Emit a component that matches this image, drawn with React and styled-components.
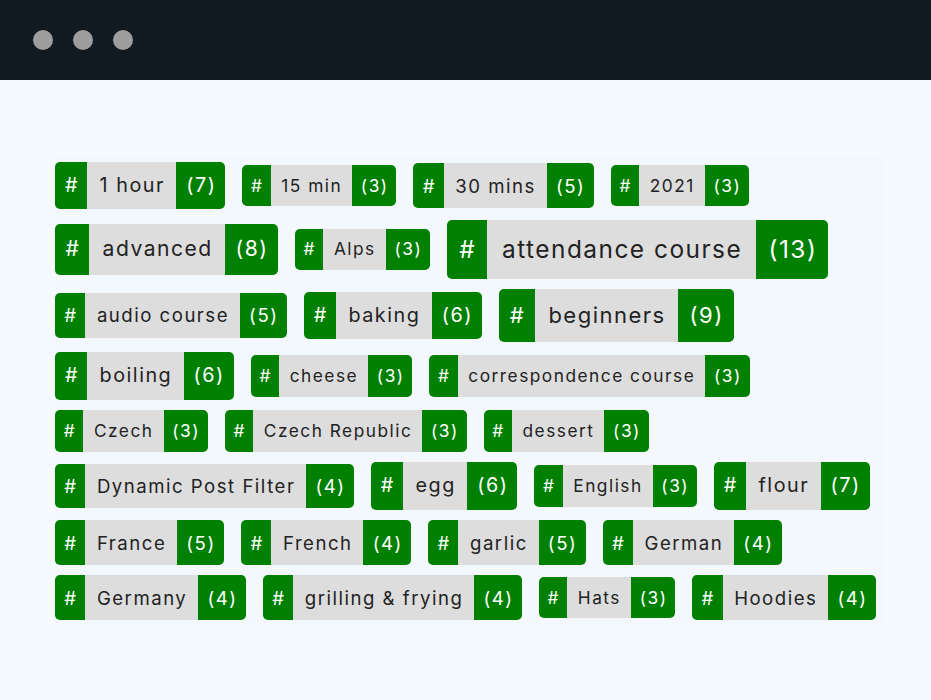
import React from 'react';
import styled,{ createGlobalStyle } from "styled-components"

const GlobalStyle = createGlobalStyle`
body {
    margin: 0;
    background: #f5faff;
    font-family: Inter, "Liberation Sans", sans-serif;
}
`

const TopBar = styled.div`
height: 80px;
background: #111a20;
display: flex;
align-items: center;
gap: 20px;
padding-left: 33px;
`

const Dot = styled.span`
width: 20px;
height: 20px;
border-radius: 50%;
background: #9e9e9e;
`

const Cloud = styled.div`
margin: 77px 48px 0 55px;
padding: 5px 0;
background: #f3f8fc;
display: flex;
flex-wrap: wrap;
align-items: center;
column-gap: 17px;
row-gap: 10.5px;
`

const Tag = styled.a`
display: flex;
border-radius: 5px;
overflow: hidden;
line-height: 1.4;
text-decoration: none;
font-size: ${p => p.$size}px;
`

const Hash = styled.span`
background: #008000;
color: #fff;
padding: 0.5em 0.5em;
`

const Name = styled.span`
background: #dddddd;
color: #222;
letter-spacing: 1.5px;
padding: 0.5em 0.58em 0.5em 0.62em;
`

const Count = styled.span`
background: #008000;
color: #fff;
letter-spacing: 1.5px;
padding: 0.5em 0.45em 0.5em 0.5em;
`

const TAGS = [
    ["1 hour",7],["15 min",3],["30 mins",5],["2021",3],
    ["advanced",8],["Alps",3],["attendance course",13],
    ["audio course",5],["baking",6],["beginners",9],
    ["boiling",6],["cheese",3],["correspondence course",3],
    ["Czech",3],["Czech Republic",3],["dessert",3],
    ["Dynamic Post Filter",4],["egg",6],["English",3],["flour",7],
    ["France",5],["French",4],["garlic",5],["German",4],
    ["Germany",4],["grilling & frying",4],["Hats",3],["Hoodies",4],
]

// font size steps by the number of posts
const SIZES = { 3: 17.3,4: 18.6,5: 18.6,6: 19.8,7: 19.8,8: 21.1,9: 22,13: 24.4 }

export default function App() {
    return <>
        <GlobalStyle />
        <TopBar>
            <Dot /><Dot /><Dot />
        </TopBar>
        <Cloud>
            {TAGS.map(([name,count]) =>
                <Tag key={name} href="#" $size={SIZES[count]}>
                    <Hash>#</Hash>
                    <Name>{name}</Name>
                    <Count>({count})</Count>
                </Tag>
            )}
        </Cloud>
    </>
};
